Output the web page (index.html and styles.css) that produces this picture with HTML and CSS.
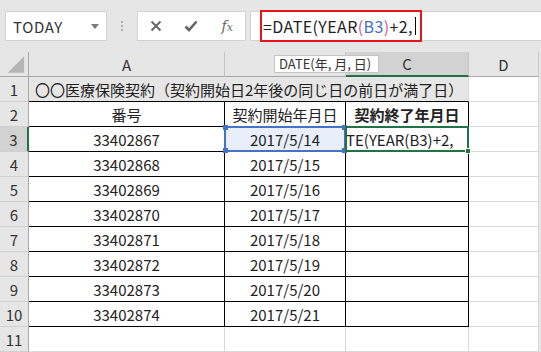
FILE: index.html
```html
<!DOCTYPE html>
<html lang="ja">
<head>
<meta charset="utf-8">
<link rel="stylesheet" href="styles.css">
</head>
<body>
<div class="app">
  <div class="toolbar">
    <div class="namebox">
      <span class="nb-text">TODAY</span>
      <svg class="nb-arrow" width="8" height="5" viewBox="0 0 8 5"><polygon points="0,0 8,0 4,5" fill="#7a7a7a"/></svg>
    </div>
    <div class="grip"><i></i><i></i><i></i></div>
    <div class="fbtns">
      <svg width="12" height="12" viewBox="0 0 12 12"><path d="M1.5 1.5 L10.5 10.5 M10.5 1.5 L1.5 10.5" stroke="#666" stroke-width="2" fill="none"/></svg>
      <svg width="14" height="12" viewBox="0 0 14 12"><path d="M1.5 6.5 L5 10 L12.5 1.5" stroke="#666" stroke-width="2.6" fill="none"/></svg>
      <span class="fx"><span class="fx-f">f</span><span class="fx-x">x</span></span>
    </div>
    <div class="fbar">
      <div class="fedit">=DATE(YEAR<span class="pk">(</span><span class="bl">B3</span><span class="pk">)</span>+2,<span class="caret"></span></div>
    </div>
  </div>

  <div class="sheet">
    <div class="c hd corner"><svg width="29" height="25" viewBox="0 0 29 25"><polygon points="8,21 25,21 25,4" fill="#b5b5b5"/></svg></div>
    <div class="c hd">A</div>
    <div class="c hd"></div>
    <div class="c hd hd-sel">C</div>
    <div class="c hd">D</div>
    <div class="c rest"></div>

    <div class="c rh">1</div>
    <div class="c title">〇〇医療保険契約（契約開始日2年後の同じ日の前日が満了日）</div>
    <div class="c"></div>
    <div class="c rest"></div>

    <div class="c rh">2</div>
    <div class="c t">番号</div>
    <div class="c t">契約開始年月日</div>
    <div class="c t bold">契約終了年月日</div>
    <div class="c"></div>
    <div class="c rest"></div>

    <div class="c rh rh-sel">3</div>
    <div class="c t">33402867</div>
    <div class="c t ref">2017/5/14<span class="refbox"><i class="k tl"></i><i class="k tr"></i><i class="k bl"></i><i class="k br"></i></span></div>
    <div class="c t active"><span class="edit-text">TE(YEAR(B3)+2,</span><span class="selbox"><i class="fill"></i></span></div>
    <div class="c"></div>
    <div class="c rest"></div>

    <div class="c rh">4</div>
    <div class="c t">33402868</div>
    <div class="c t">2017/5/15</div>
    <div class="c t"></div>
    <div class="c"></div>
    <div class="c rest"></div>

    <div class="c rh">5</div>
    <div class="c t">33402869</div>
    <div class="c t">2017/5/16</div>
    <div class="c t"></div>
    <div class="c"></div>
    <div class="c rest"></div>

    <div class="c rh">6</div>
    <div class="c t">33402870</div>
    <div class="c t">2017/5/17</div>
    <div class="c t"></div>
    <div class="c"></div>
    <div class="c rest"></div>

    <div class="c rh">7</div>
    <div class="c t">33402871</div>
    <div class="c t">2017/5/18</div>
    <div class="c t"></div>
    <div class="c"></div>
    <div class="c rest"></div>

    <div class="c rh">8</div>
    <div class="c t">33402872</div>
    <div class="c t">2017/5/19</div>
    <div class="c t"></div>
    <div class="c"></div>
    <div class="c rest"></div>

    <div class="c rh">9</div>
    <div class="c t">33402873</div>
    <div class="c t">2017/5/20</div>
    <div class="c t"></div>
    <div class="c"></div>
    <div class="c rest"></div>

    <div class="c rh">10</div>
    <div class="c t">33402874</div>
    <div class="c t">2017/5/21</div>
    <div class="c t"></div>
    <div class="c"></div>
    <div class="c rest"></div>

    <div class="c rh">11</div>
    <div class="c"></div>
    <div class="c"></div>
    <div class="c"></div>
    <div class="c"></div>
    <div class="c rest"></div>

    <div class="tip">DATE(年, 月, 日)</div>
  </div>
</div>
</body>
</html>
```

FILE: styles.css
```css
* { box-sizing: border-box; }
html, body { margin: 0; padding: 0; }
body {
  background: #e6e6e6;
  font-family: "Noto Sans CJK JP", "Noto Sans", sans-serif;
  color: #222;
  width: 541px;
  height: 352px;
  overflow: hidden;
}
.app { width: 541px; }

.toolbar {
  height: 52px;
  padding-top: 11px;
  display: flex;
  align-items: flex-start;
  background: #e6e6e6;
}
.namebox {
  margin-left: 5px;
  width: 102px;
  height: 30px;
  background: #fff;
  border: 1px solid #d2d2d2;
  display: flex;
  align-items: center;
  justify-content: space-between;
  padding: 0 7px 0 7px;
}
.nb-text { font-size: 15px; color: #333; letter-spacing: 0.6px; }
.grip {
  width: 30px;
  height: 30px;
  display: flex;
  flex-direction: column;
  align-items: center;
  justify-content: center;
  gap: 2px;
}
.grip i { display: block; width: 2px; height: 2px; background: #b0b0b0; }
.fbtns {
  width: 109px;
  height: 30px;
  background: #fff;
  border: 1px solid #d2d2d2;
  display: grid;
  grid-template-columns: repeat(3, 1fr);
  align-items: center;
  justify-items: center;
}
.fx { font-family: "DejaVu Serif", "Liberation Serif", serif; font-style: italic; color: #666; font-size: 14px; line-height: 1; }
.fx-x { font-size: 11px; }
.fbar {
  margin-left: 4px;
  flex: 1;
  height: 30px;
  background: #fff;
  border: 1px solid #d2d2d2;
  border-right: none;
  padding-left: 9px;
  display: flex;
  align-items: center;
}
.fedit {
  width: 162px;
  height: 32px;
  border: 2px solid #e8141b;
  padding-left: 1px;
  font-size: 16px;
  letter-spacing: 0.4px;
  line-height: 28px;
  color: #222;
  display: flex;
  align-items: center;
  white-space: nowrap;
}
.pk { color: #c9599c; }
.bl { color: #4472c4; }
.caret { display: inline-block; width: 1px; height: 18px; background: #000; margin-left: 2px; }

.sheet {
  position: relative;
  display: grid;
  grid-template-columns: 29px 196px 121px 123px 70px 2px;
  grid-auto-rows: 25px;
  background: #fff;
}
.c {
  border-right: 1px solid #d9d9d9;
  border-bottom: 1px solid #d9d9d9;
  display: flex;
  align-items: center;
  justify-content: center;
  font-size: 15px;
  white-space: nowrap;
}
.rest { background: #e6e6e6; border: none; }
.hd {
  background: #e6e6e6;
  border-right-color: #c6c6c6;
  border-bottom-color: #a8a8a8;
  color: #333;
  font-size: 15px;
}
.corner { padding: 0; border-right-color: #a8a8a8; }
.corner svg { display: block; }
.hd-sel { background: #d2d2d2; border-bottom: 2px solid #217346; }
.rh {
  background: #e6e6e6;
  border-right-color: #a8a8a8;
  border-bottom-color: #d0d0d0;
  color: #333;
  font-size: 15px;
}
.rh-sel { background: #d2d2d2; border-right: 2px solid #217346; }
.title {
  grid-column: 2 / 5;
  background: #e7e6e6;
  border-bottom: 1px solid #000;
  border-right: 1px solid #d9d9d9;
  justify-content: flex-start;
  padding-left: 6px;
  font-size: 15px;
}
.t { border-right-color: #000; border-bottom-color: #000; }
.bold { font-weight: bold; }
.ref { position: relative; background: #e8eefa; }
.refbox {
  position: absolute;
  left: -1px; top: -1px; right: -1px; bottom: -1px;
  border: 2px solid #4472c4;
}
.k { position: absolute; width: 5px; height: 5px; background: #4472c4; }
.k.tl { left: -3px; top: -3px; }
.k.tr { right: -3px; top: -3px; }
.k.bl { left: -3px; bottom: -3px; }
.k.br { right: -3px; bottom: -3px; }
.active { position: relative; justify-content: flex-start; }
.edit-text { padding-left: 0px; overflow: hidden; }
.selbox {
  position: absolute;
  left: -1px; top: -1px; right: -1px; bottom: -1px;
  border: 2px solid #217346;
}
.fill {
  position: absolute;
  right: -4px; bottom: -4px;
  width: 6px; height: 6px;
  background: #217346;
  border: 1px solid #fff;
}
.tip {
  position: absolute;
  left: 274px;
  top: 3px;
  height: 18px;
  width: 105px;
  background: #fff;
  border: 1px solid #c4c4c4;
  font-size: 13px;
  line-height: 16px;
  color: #333;
  padding-left: 4px;
  white-space: nowrap;
}
```
